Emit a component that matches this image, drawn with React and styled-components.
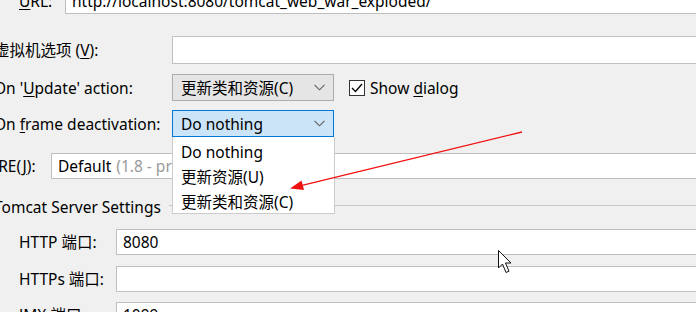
import React from "react";
import styled, { createGlobalStyle } from "styled-components";

const GlobalStyle = createGlobalStyle`
  html, body {
    margin: 0;
    padding: 0;
    background: #f0f0f0;
    overflow: hidden;
  }
  body {
    width: 696px;
    height: 312px;
    font-family: "Noto Sans", "Noto Sans CJK SC", sans-serif;
    font-size: 15.5px;
    color: #000;
  }
`;

const Page = styled.div`
  position: relative;
  width: 696px;
  height: 312px;
  overflow: hidden;
`;

const Form = styled.div`
  display: flex;
  flex-direction: column;
  margin-top: -13px;
  margin-left: -6px;
`;

const Row = styled.div`
  display: flex;
  align-items: center;
  height: ${(p) => p.$h || 27}px;
  margin-top: ${(p) => p.$top || 0}px;
  padding-left: ${(p) => (p.$indent ? 25 : 0)}px;
`;

const Label = styled.div`
  width: ${(p) => p.$w}px;
  flex-shrink: 0;
  white-space: nowrap;
  line-height: 20px;
`;

const U = styled.span`
  text-decoration: underline;
  text-underline-offset: 2px;
`;

const Field = styled.div`
  flex: 1;
  height: 100%;
  box-sizing: border-box;
  background: #fff;
  border: 1px solid #bfbfbf;
  margin-right: -20px;
  padding-left: 6px;
  display: flex;
  align-items: center;
  white-space: nowrap;
  overflow: hidden;
`;

const Hint = styled.span`
  color: #9a9a9a;
  margin-left: 5px;
`;

const ComboWrap = styled.div`
  position: relative;
  width: 162px;
  height: 100%;
  flex-shrink: 0;
`;

const Combo = styled.div`
  box-sizing: border-box;
  height: 100%;
  display: flex;
  align-items: center;
  justify-content: space-between;
  padding: 0 8px 0 8px;
  border: 1px solid ${(p) => (p.$focused ? "#0078d7" : "#adadad")};
  background: ${(p) => (p.$focused ? "#cce4f7" : "#e5e5e5")};
  white-space: nowrap;
`;

const Chevron = () => (
  <svg width="11" height="7" viewBox="0 0 11 7">
    <path d="M0.5 0.8 L5.5 5.8 L10.5 0.8" fill="none" stroke="#606060" strokeWidth="1.1" />
  </svg>
);

const Popup = styled.div`
  position: absolute;
  top: 100%;
  left: 0;
  width: 163px;
  height: 77px;
  box-sizing: border-box;
  background: #fff;
  border: 1px solid #cccccc;
  border-top: none;
  z-index: 2;
  display: flex;
  flex-direction: column;
  padding-top: 3px;
`;

const Option = styled.div`
  height: 25px;
  line-height: 25px;
  padding-left: 8px;
  white-space: nowrap;
`;

const Check = styled.label`
  display: flex;
  align-items: center;
  gap: 5px;
  margin-left: 15px;
  white-space: nowrap;
`;

const Box = styled.span`
  width: 16px;
  height: 16px;
  box-sizing: border-box;
  border: 1px solid #333;
  background: #fff;
  display: flex;
  align-items: center;
  justify-content: center;
`;

const Section = styled.div`
  display: flex;
  align-items: center;
  gap: 8px;
  height: 20px;
  margin-top: 18px;
  white-space: nowrap;
  &::after {
    content: "";
    flex: 1;
    border-top: 1px solid #c8c8c8;
    margin-top: -3px;
    margin-right: -20px;
  }
`;

const Overlay = styled.svg`
  position: absolute;
  left: 0;
  top: 0;
  pointer-events: none;
  z-index: 5;
`;

export default function App() {
  return (
    <Page>
      <GlobalStyle />
      <Form>
        <Row $indent>
          <Label $w={46}>
            <U>U</U>RL:
          </Label>
          <Field>http://localhost:8080/tomcat_web_war_exploded/</Field>
        </Row>
        <Row $top={22} $h={28}>
          <Label $w={178}>
            虚拟机选项 (<U>V</U>):
          </Label>
          <Field />
        </Row>
        <Row $top={10}>
          <Label $w={178}>
            On '<U>U</U>pdate' action:
          </Label>
          <ComboWrap>
            <Combo>
              更新类和资源(C)
              <Chevron />
            </Combo>
          </ComboWrap>
          <Check>
            <Box>
              <svg width="12" height="10" viewBox="0 0 12 10">
                <path d="M1 5 L4.5 8.5 L11 1" fill="none" stroke="#000" strokeWidth="1.3" />
              </svg>
            </Box>
            <span>
              Show <U>d</U>ialog
            </span>
          </Check>
        </Row>
        <Row $top={9}>
          <Label $w={178}>
            On <U>f</U>rame deactivation:
          </Label>
          <ComboWrap>
            <Combo $focused>
              Do nothing
              <Chevron />
            </Combo>
            <Popup>
              <Option>Do nothing</Option>
              <Option>更新资源(U)</Option>
              <Option>更新类和资源(C)</Option>
            </Popup>
          </ComboWrap>
        </Row>
        <Row $top={16} $h={26}>
          <Label $w={57}>
            JRE(<U>J</U>):
          </Label>
          <Field>
            Default<Hint>(1.8 - project SDK)</Hint>
          </Field>
        </Row>
        <Section>Tomcat Server Settings</Section>
        <Row $indent $top={12} $h={26}>
          <Label $w={97}>HTTP 端口:</Label>
          <Field>8080</Field>
        </Row>
        <Row $indent $top={11} $h={26}>
          <Label $w={97}>HTTPs 端口:</Label>
          <Field />
        </Row>
        <Row $indent $top={10} $h={26}>
          <Label $w={97}>JMX 端口:</Label>
          <Field>1099</Field>
        </Row>
      </Form>
      <Overlay width="696" height="312" viewBox="0 0 696 312">
        <line x1="522" y1="132" x2="300" y2="185.8" stroke="#f01010" strokeWidth="1.3" />
        <polygon points="290,188.5 301.5,180.5 304,190" fill="#f01010" />
        <path
          d="M498.5 250.5 L498.5 268 L502.5 264 L506 272.5 L509 271.2 L505.5 263 L511 263 Z"
          fill="#fff"
          stroke="#111"
          strokeWidth="1"
          strokeLinejoin="miter"
        />
      </Overlay>
    </Page>
  );
}
